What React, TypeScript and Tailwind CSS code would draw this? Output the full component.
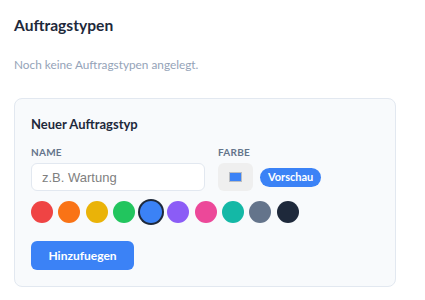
const colors = [
  "#ef4444",
  "#f97316",
  "#eab308",
  "#22c55e",
  "#3b82f6",
  "#8b5cf6",
  "#ec4899",
  "#14b8a6",
  "#64748b",
  "#1e293b",
];

export default function App() {
  const selected = "#3b82f6";

  return (
    <div className="min-h-[300px] bg-white px-3.5 pt-[15px] font-['Lato',sans-serif] text-[#1e293b]">
      {/* Heading */}
      <h1 className="text-[15.6px] leading-5 font-bold">Auftragstypen</h1>

      <p className="mt-[22px] text-[11.8px] leading-4 text-[#94a3b8]">
        Noch keine Auftragstypen angelegt.
      </p>

      {/* New type card */}
      <div className="mt-[25px] w-[382px] rounded-lg border border-[#e2e8f0] bg-[#f8fafc] px-4 pt-4 pb-4">
        <h2 className="text-[13px] leading-[18px] font-bold">Neuer Auftragstyp</h2>

        <div className="mt-3 flex gap-[13px]">
          <div className="flex flex-col">
            <label className="text-[10px] leading-[14px] font-bold tracking-wide text-[#64748b] uppercase">
              Name
            </label>
            <input
              type="text"
              placeholder="z.B. Wartung"
              className="mt-1 h-7 w-[174px] rounded-md border border-[#e2e8f0] bg-white px-2.5 font-['Liberation_Sans',sans-serif] text-[13px] outline-none placeholder:text-[#808080]"
            />
          </div>
          <div className="flex flex-col">
            <label className="text-[10px] leading-[14px] font-bold tracking-wide text-[#64748b] uppercase">
              Farbe
            </label>
            <div className="mt-1 flex items-center gap-[7px]">
              <div className="flex h-7 w-[35px] items-center justify-center rounded-md bg-[#efefef]">
                <span className="h-2 w-[11px] bg-[#3b82f6] ring-1 ring-[#6b7280]/40" />
              </div>
              <span className="flex h-[19px] items-center rounded-full bg-[#3b82f6] px-2 text-[11px] font-bold text-white">
                Vorschau
              </span>
            </div>
          </div>
        </div>

        {/* Swatches */}
        <div className="mt-[10px] flex gap-[5.3px]">
          {colors.map((c) => (
            <span
              key={c}
              className={
                c === selected
                  ? "h-[22px] w-[22px] rounded-full ring-2 ring-[#1e293b]"
                  : "h-[22px] w-[22px] rounded-full"
              }
              style={{ backgroundColor: c }}
            />
          ))}
        </div>

        <button className="mt-[18px] h-[29px] w-[103px] rounded-md bg-[#3b82f6] text-[12px] font-bold text-white">
          Hinzufuegen
        </button>
      </div>
    </div>
  );
}
